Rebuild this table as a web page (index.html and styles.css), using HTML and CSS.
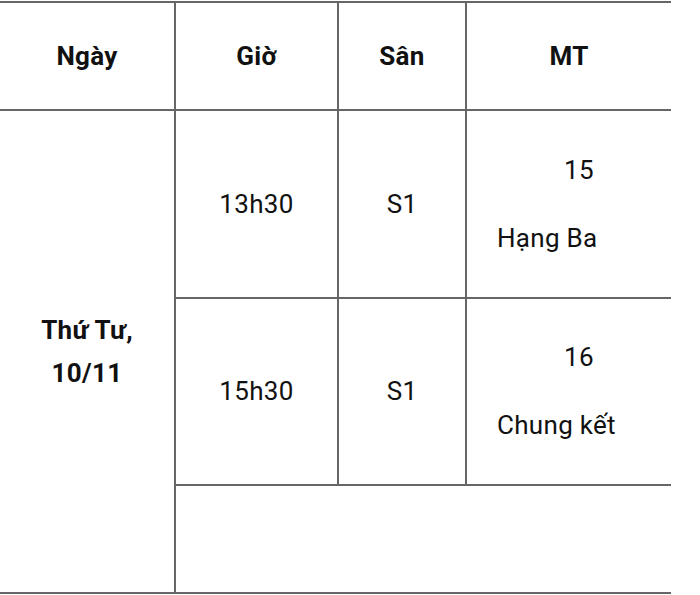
FILE: index.html
```html
<!DOCTYPE html>
<html lang="vi">
<head>
<meta charset="utf-8">
<title>Lịch thi đấu</title>
<link rel="stylesheet" href="styles.css">
</head>
<body>
<table class="schedule">
  <colgroup>
    <col class="c-day">
    <col class="c-time">
    <col class="c-court">
    <col class="c-match">
  </colgroup>
  <thead>
    <tr class="head-row">
      <th>Ngày</th>
      <th>Giờ</th>
      <th>Sân</th>
      <th class="last">MT</th>
    </tr>
  </thead>
  <tbody>
    <tr class="row-a">
      <td class="day" rowspan="3"><p>Thứ Tư, 10/11</p></td>
      <td class="center">13h30</td>
      <td class="center">S1</td>
      <td class="match last"><p class="num">15</p><p>Hạng Ba</p></td>
    </tr>
    <tr class="row-b">
      <td class="center">15h30</td>
      <td class="center">S1</td>
      <td class="match last"><p class="num">16</p><p>Chung kết</p></td>
    </tr>
    <tr class="row-c">
      <td class="empty last" colspan="3"></td>
    </tr>
  </tbody>
</table>
</body>
</html>
```

FILE: styles.css
```css
html, body {
  margin: 0;
  padding: 0;
  background: #ffffff;
}

body {
  font-family: Roboto, "Liberation Sans", sans-serif;
  color: #111111;
  font-size: 26px;
  letter-spacing: 0.3px;
  line-height: 43px;
}

.schedule {
  margin-top: 1px;
  border-collapse: separate;
  border-spacing: 0;
  table-layout: fixed;
  width: 671px;
  border-top: 2px solid #666666;
}

.c-day { width: 176px; }
.c-time { width: 163px; }
.c-court { width: 128px; }
.c-match { width: 204px; }

.schedule th,
.schedule td {
  box-sizing: border-box;
  border-right: 2px solid #666666;
  border-bottom: 2px solid #666666;
  padding: 0;
  vertical-align: middle;
}

.schedule .last {
  border-right: none;
}

.schedule th {
  font-weight: 700;
  text-align: center;
}

.head-row { height: 108px; }
.row-a { height: 188px; }
.row-b { height: 187px; }
.row-c { height: 108px; }

.schedule .center {
  text-align: center;
}

.schedule .day {
  text-align: center;
  font-weight: 700;
  padding: 0 30px;
}

.day p {
  margin: 0;
}

.schedule .match {
  padding: 0 10px 0 30px;
}

.match p {
  margin: 25px 0 0;
}

.match p:first-child {
  margin-top: 0;
}

.match .num {
  padding-left: 67px;
}
```
